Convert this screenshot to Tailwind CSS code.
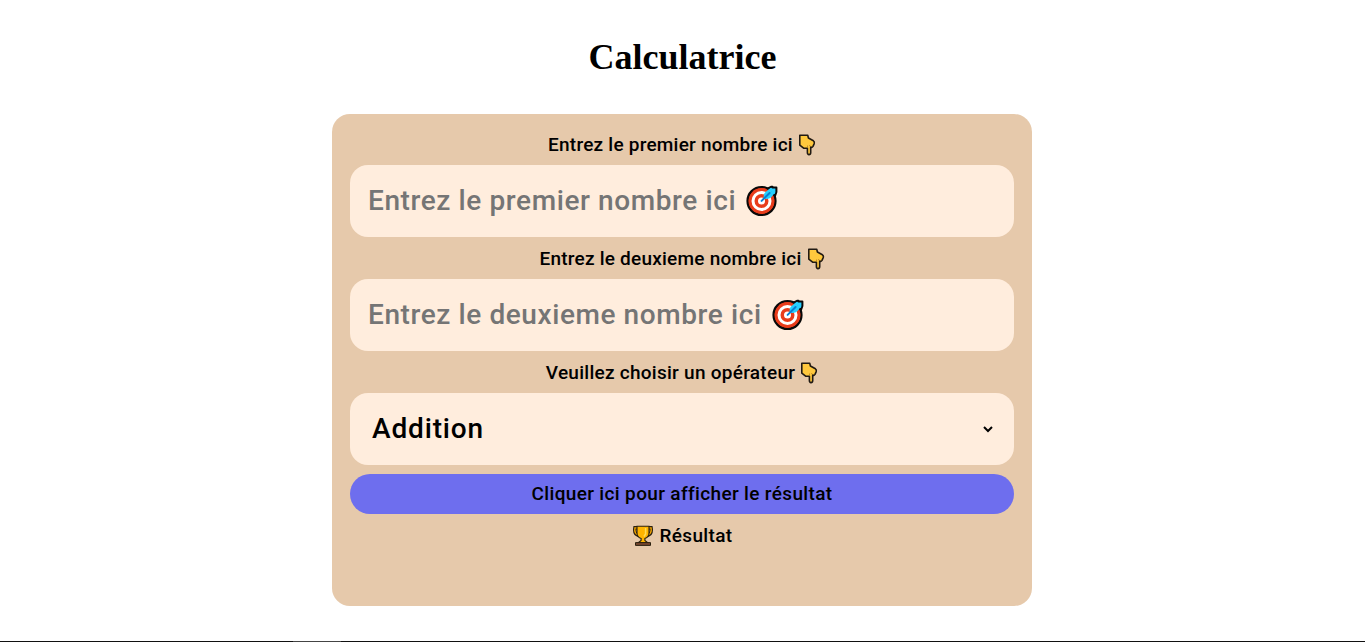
<!DOCTYPE html>
<html lang="fr">
<head>
<meta charset="utf-8">
<title>Calculatrice</title>
<script src="https://cdn.jsdelivr.net/npm/@tailwindcss/browser@4"></script>
</head>
<body class="bg-white text-black h-[642px] overflow-hidden flex flex-col items-center font-['Roboto',sans-serif] font-medium">
<svg class="hidden">
  <symbol id="hand" viewBox="0 0 18 22">
    <path d="M1.8 1.3H9.8L10.4 4L15.4 6.8Q16.8 7.8 16.2 9.6L15 12.4Q14 13.8 12.7 13V18.6Q12.6 20.6 11 20.6T9.4 18.6V14.2H5.6L1.8 11.2Z" fill="#ffc83d" stroke="#211a13" stroke-width="1.6" stroke-linejoin="round"/>
    <path d="M9.5 13.4V11.5M12.4 12.6L11.4 11" fill="none" stroke="#a8771c" stroke-width=".7"/>
  </symbol>
  <symbol id="target" viewBox="0 0 32 32">
    <circle cx="15.5" cy="16" r="14" fill="#e83c1b" stroke="#090909" stroke-width="2.2"/>
    <path d="M21 4L25 1.8L26.5 1.8V2.4H30.4V7L29 11Z" fill="#26cfff" stroke="#090909" stroke-width="2" stroke-linejoin="round"/>
    <circle cx="15.5" cy="16" r="12.8" fill="#e83c1b"/>
    <circle cx="15.5" cy="16" r="8.5" fill="none" stroke="#fff" stroke-width="3"/>
    <circle cx="15.5" cy="16" r="3.5" fill="#fff"/>
    <path d="M17.8 13.6Q17 9.5 19.5 7L25 2.8L25.8 6.4L29.4 7L25.5 12Q22.5 15 17.8 13.6Z" fill="#26cfff"/>
    <path d="M15.6 15.9L23.6 8" stroke="#087fd3" stroke-width="2" stroke-linecap="round"/>
  </symbol>
</svg>
<h1 class="mt-[35px] h-[44px] leading-[44px] text-[36px] font-bold font-['Liberation_Serif',serif]">Calculatrice</h1>
<main class="mt-[35px] w-[700px] h-[492px] shrink-0 mr-px rounded-[18px] bg-[#e6c9ab] px-[18px] pt-[9px]">
  <div class="h-[42px] flex items-center justify-center gap-[5px] pt-[2px] text-[19px]"><span class="whitespace-nowrap tracking-[0.23px]">Entrez le premier nombre ici</span><svg class="w-[18px] h-[22px]"><use href="#hand"/></svg></div>
  <div class="h-[72px] rounded-[18px] bg-[#ffeddd] flex items-center pl-[18px] gap-[10px] pb-px text-[28px] text-[#757575]"><span class="whitespace-nowrap tracking-[0.6px]">Entrez le premier nombre ici</span><svg class="w-8 h-8"><use href="#target"/></svg></div>
  <div class="h-[42px] flex items-center justify-center gap-[5px] pt-[2px] text-[19px]"><span class="whitespace-nowrap tracking-[0.23px]">Entrez le deuxieme nombre ici</span><svg class="w-[18px] h-[22px]"><use href="#hand"/></svg></div>
  <div class="h-[72px] rounded-[18px] bg-[#ffeddd] flex items-center pl-[18px] gap-[10px] pb-px text-[28px] text-[#757575]"><span class="whitespace-nowrap tracking-[0.59px]">Entrez le deuxieme nombre ici</span><svg class="w-8 h-8"><use href="#target"/></svg></div>
  <div class="h-[42px] flex items-center justify-center gap-[5px] pt-[2px] text-[19px]"><span class="whitespace-nowrap tracking-[0.27px]">Veuillez choisir un opérateur</span><svg class="w-[18px] h-[22px]"><use href="#hand"/></svg></div>
  <div class="h-[72px] rounded-[18px] bg-[#ffeddd] flex items-center justify-between pl-[22px] pr-[21px] text-[28px]"><span class="tracking-[0.85px]">Addition</span><svg class="w-[10px] h-[8px]" viewBox="0 0 10 8"><path d="M1 2L5 6L9 2" fill="none" stroke="#000" stroke-width="2"/></svg></div>
  <button class="mt-[9px] w-full h-[40px] rounded-full bg-[#6e6eee] flex items-center justify-center text-[19px]"><span class="whitespace-nowrap tracking-[0.35px]">Cliquer ici pour afficher le résultat</span></button>
  <div class="h-[42px] flex items-center justify-center gap-[5px] pt-[2px] pl-px text-[19px]">
    <svg class="w-[22px] h-[22px]" viewBox="0 0 22 22"><path d="M5 2.8H2.9Q1.8 9.2 6.7 10.6M17 2.8H19.1Q20.2 9.2 15.3 10.6" fill="none" stroke="#2b210f" stroke-width="3.4"/><path d="M5 2.8H2.9Q2 8.8 6.7 10.2M17 2.8H19.1Q20 8.8 15.3 10.2" fill="none" stroke="#f9a800" stroke-width="1.3"/><path d="M5 1.2H17V8Q17 12 12.9 13.5V15.5L15.8 17.8H6.2L9.1 15.5V13.5Q5 12 5 8Z" fill="#ffb400" stroke="#2b210f" stroke-width="1.1"/><path d="M13.6 3V9L12 11.5" fill="none" stroke="#ffdc55" stroke-width="1.5"/><path d="M3.5 17.6H18.5V20.4H3.5Z" fill="#75452e" stroke="#2b210f"/></svg>
    <span class="tracking-[0.35px]">Résultat</span></div>
</main>
<div class="mt-[35px] w-full h-px shrink-0 bg-[#111] pl-[293px]"><div class="w-[48px] h-px bg-[#444]"></div></div>
</body>
</html>
